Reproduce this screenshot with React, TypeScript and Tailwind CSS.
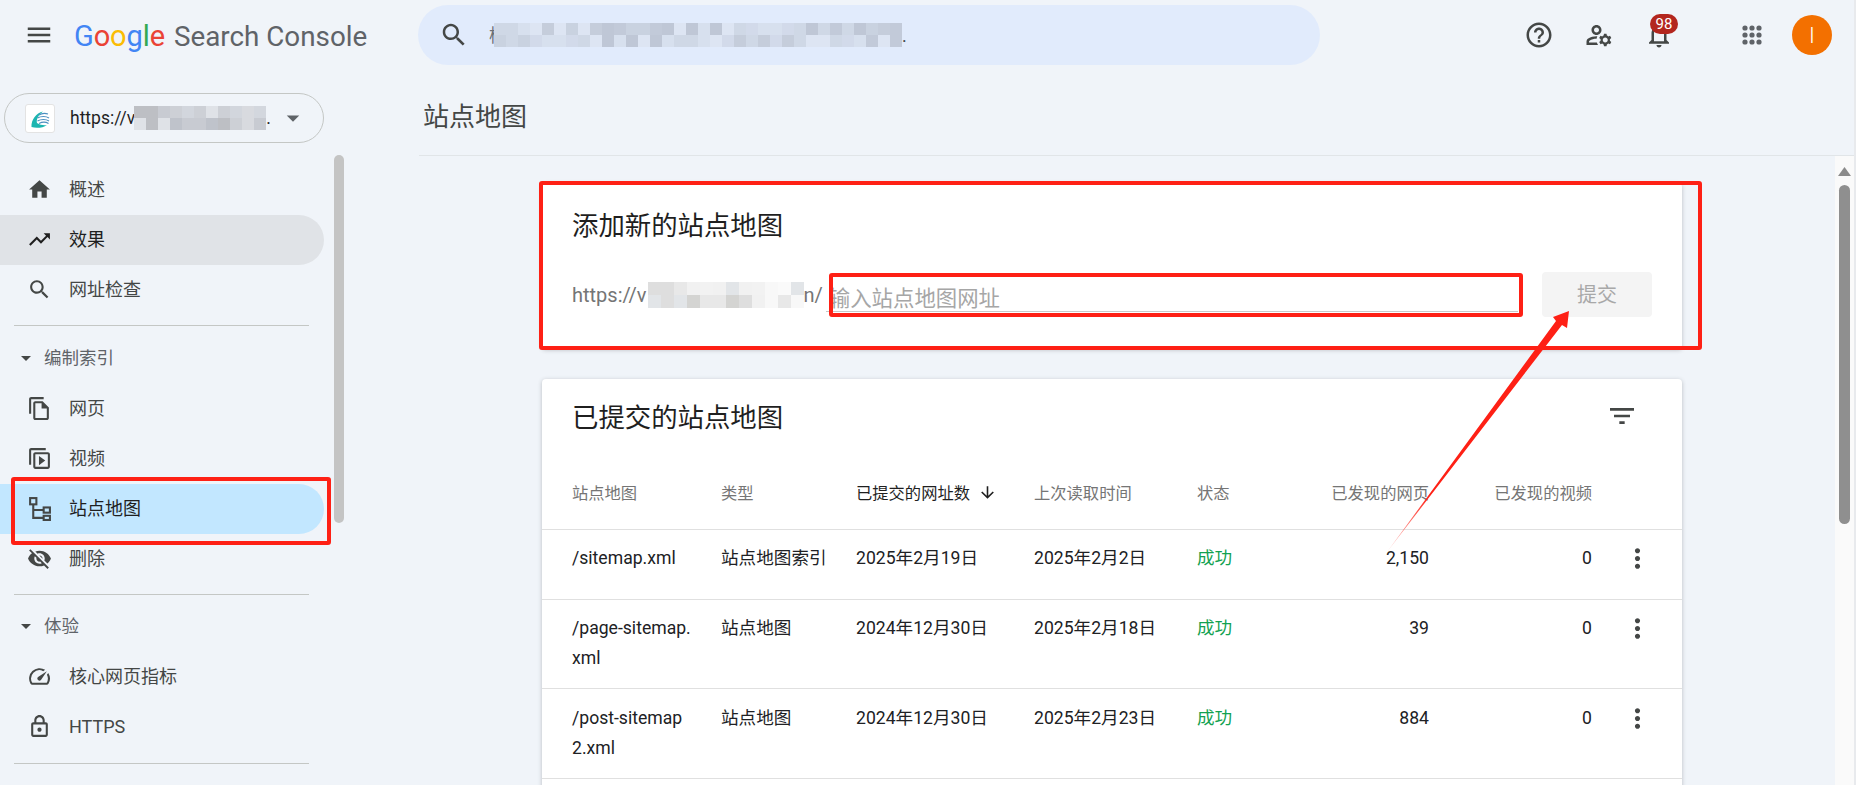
import React from "react";

const P = {
  menu: "M3 18h18v-2H3v2zm0-5h18v-2H3v2zm0-7v2h18V6H3z",
  home: "M10 20v-6h4v6h5v-8h3L12 3 2 12h3v8z",
  trend: "M16 6l2.29 2.29-4.88 4.88-4-4L2 16.59 3.41 18l6-6 4 4 6.3-6.29L22 12V6z",
  search: "M15.5 14h-.79l-.28-.27C15.41 12.59 16 11.11 16 9.5 16 5.91 13.09 3 9.5 3S3 5.91 3 9.5 5.91 16 9.5 16c1.61 0 3.09-.59 4.23-1.57l.27.28v.79l5 4.99L20.49 19l-4.99-5zm-6 0C7.01 14 5 11.99 5 9.5S7.01 5 9.5 5 14 7.01 14 9.5 11.99 14 9.5 14z",
  drop: "M7 10l5 5 5-5z",
  copy: "M16 1H4c-1.1 0-2 .9-2 2v14h2V3h12V1zm-1 4H8c-1.1 0-2 .9-2 2v14c0 1.1.9 2 2 2h11c1.1 0 2-.9 2-2V11l-6-6zM8 21V7h6v5h5v9H8z",
  video: "M2 4v14h2V4h14V2H4c-1.1 0-2 .9-2 2zm6 2c-1.1 0-2 .9-2 2v12c0 1.1.9 2 2 2h12c1.1 0 2-.9 2-2V8c0-1.1-.9-2-2-2H8zm0 2h12v12H8V8zm3.5 1.5v9l6-4.5z",
  off: "M12 7c2.76 0 5 2.24 5 5 0 .65-.13 1.26-.36 1.83l2.92 2.92c1.51-1.26 2.7-2.89 3.43-4.75-1.73-4.39-6-7.5-11-7.5-1.4 0-2.74.25-3.98.7l2.16 2.16C10.74 7.13 11.35 7 12 7zM2 4.27l2.28 2.28.46.46C3.08 8.3 1.78 10.02 1 12c1.73 4.39 6 7.5 11 7.5 1.55 0 3.03-.3 4.38-.84l.42.42L19.73 22 21 20.73 3.27 3 2 4.27zM7.53 9.8l1.55 1.55c-.05.21-.08.43-.08.65 0 1.66 1.34 3 3 3 .22 0 .44-.03.65-.08l1.55 1.55c-.67.33-1.41.53-2.2.53-2.76 0-5-2.24-5-5 0-.79.2-1.53.53-2.2zm4.31-.78l3.15 3.15.02-.16c0-1.66-1.34-3-3-3l-.17.01z",
  speed: "M20.38 8.57l-1.23 1.85a8 8 0 0 1-.22 7.58H5.07A8 8 0 0 1 15.58 6.85l1.85-1.23A10 10 0 0 0 3.35 19a2 2 0 0 0 1.72 1h13.85a2 2 0 0 0 1.74-1 10 10 0 0 0-.27-10.44zm-9.79 6.84a2 2 0 0 0 2.83 0l5.66-8.49-8.49 5.66a2 2 0 0 0 0 2.83z",
  lock: "M18 8h-1V6c0-2.76-2.24-5-5-5S7 3.24 7 6v2H6c-1.1 0-2 .9-2 2v10c0 1.1.9 2 2 2h12c1.1 0 2-.9 2-2V10c0-1.1-.9-2-2-2zM9 6c0-1.66 1.34-3 3-3s3 1.34 3 3v2H9V6zm9 14H6V10h12v10zm-6-3c1.1 0 2-.9 2-2s-.9-2-2-2-2 .9-2 2 .9 2 2 2z",
  help: "M11 18h2v-2h-2v2zm1-16C6.48 2 2 6.48 2 12s4.48 10 10 10 10-4.48 10-10S17.52 2 12 2zm0 18c-4.41 0-8-3.59-8-8s3.59-8 8-8 8 3.59 8 8-3.59 8-8 8zm0-14c-2.21 0-4 1.79-4 4h2c0-1.1.9-2 2-2s2 .9 2 2c0 2-3 1.75-3 5h2c0-2.25 3-2.5 3-5 0-2.21-1.79-4-4-4z",
  manage: "M4 18v-.65c0-.34.16-.66.41-.81C6.1 15.53 8.03 15 10 15c.03 0 .05 0 .08.01.1-.7.3-1.37.59-1.98-.22-.02-.44-.03-.67-.03-2.42 0-4.68.67-6.61 1.82-.88.52-1.39 1.5-1.39 2.53V20h9.26c-.42-.6-.75-1.28-.97-2H4zM10 12c2.21 0 4-1.79 4-4s-1.79-4-4-4-4 1.79-4 4 1.79 4 4 4zm0-6c1.1 0 2 .9 2 2s-.9 2-2 2-2-.9-2-2 .9-2 2-2zM20.75 16c0-.22-.03-.42-.06-.63l1.14-1.01-1-1.73-1.45.49c-.32-.27-.68-.48-1.08-.63L18 11h-2l-.3 1.49c-.4.15-.76.36-1.08.63l-1.45-.49-1 1.73 1.14 1.01c-.03.21-.06.41-.06.63s.03.42.06.63l-1.14 1.01 1 1.73 1.45-.49c.32.27.68.48 1.08.63L16 21h2l.3-1.49c.4-.15.76-.36 1.08-.63l1.45.49 1-1.73-1.14-1.01c.03-.21.06-.41.06-.63zM17 18c-1.1 0-2-.9-2-2s.9-2 2-2 2 .9 2 2-.9 2-2 2z",
  bell: "M12 22c1.1 0 2-.9 2-2h-4c0 1.1.9 2 2 2zm6-6v-5c0-3.07-1.63-5.64-4.5-6.32V4c0-.83-.67-1.5-1.5-1.5s-1.5.67-1.5 1.5v.68C7.64 5.36 6 7.92 6 11v5l-2 2v1h16v-1l-2-2zm-2 1H8v-6c0-2.48 1.51-4.5 4-4.5s4 2.02 4 4.5v6z",
  filter: "M10 18h4v-2h-4v2zM3 6v2h18V6H3zm3 7h12v-2H6v2z",
  more: "M12 8c1.1 0 2-.9 2-2s-.9-2-2-2-2 .9-2 2 .9 2 2 2zm0 2c-1.1 0-2 .9-2 2s.9 2 2 2 2-.9 2-2-.9-2-2-2zm0 6c-1.1 0-2 .9-2 2s.9 2 2 2 2-.9 2-2-.9-2-2-2z",
  down: "M20 12l-1.41-1.41L13 16.17V4h-2v12.17l-5.58-5.59L4 12l8 8 8-8z",
};

function Icon({ d, className }: { d: string; className: string }) {
  return (
    <svg viewBox="0 0 24 24" className={className} fill="currentColor" fillRule="evenodd">
      <path d={d} />
    </svg>
  );
}

function SitemapIcon() {
  return (
    <svg viewBox="0 0 24 24" className="w-[25px] h-[25px] shrink-0 text-[#444746]" fill="none" stroke="currentColor" strokeWidth="2">
      <rect x="3" y="2" width="6" height="6" />
      <rect x="16" y="11" width="6" height="5" />
      <rect x="16" y="19" width="6" height="4" />
      <path d="M6 8v13h10M6 13.5h10" />
    </svg>
  );
}

function Mosaic({ cols, rows, cell, palette, className }: { cols: number; rows: number; cell: number; palette: string[]; className: string }) {
  const rects: React.ReactNode[] = [];
  for (let r = 0; r < rows; r++) {
    for (let c = 0; c < cols; c++) {
      const v = (c * 7 + r * 5 + ((c * c) % 11) + c * r * 3) % palette.length;
      rects.push(<rect key={r + "-" + c} x={c * cell} y={r * cell} width={cell} height={cell} fill={palette[v]} />);
    }
  }
  return (
    <svg width={cols * cell} height={rows * cell} className={className} shapeRendering="crispEdges">
      {rects}
    </svg>
  );
}

const sidePalette = ["#bdbfc4", "#d2d6dd", "#c8cbd2", "#d8dadf", "#bfc3cb", "#dfe2e7", "#cdd0d6", "#d3d7de"];
const searchPalette = ["#cfd8e6", "#c5cddb", "#d7e0ee", "#bfc7d6", "#d2daea", "#c9d2e0", "#dde5f3", "#c2cad9"];
const cardPalette = ["#dedede", "#f2f2f2", "#e8e8e8", "#f8f8f8", "#d4d4d2", "#e2e5e8", "#f1f1f1", "#fafafa"];

function NavRow({ label, icon, state }: { label: string; icon: React.ReactNode; state?: "hover" | "active" }) {
  const bg = state === "hover" ? "bg-[#e0e3e7] rounded-r-full text-[#1f1f1f]" : state === "active" ? "bg-[#c2e7ff] rounded-r-full text-[#1f1f1f]" : "text-[#444746]";
  return (
    <div className={"flex items-center h-[50px] pb-[1px] pl-[27px] gap-[17px] text-[18px] " + bg}>
      {icon}
      <span>{label}</span>
    </div>
  );
}

function SectionHead({ label }: { label: string }) {
  return (
    <div className="flex items-center h-[50px] pb-[2px] pl-[14px] gap-[6px] text-[17.5px] text-[#5f6368]">
      <Icon d={P.drop} className="w-6 h-6 text-[#444746]" />
      <span>{label}</span>
    </div>
  );
}

const ic = "w-[25px] h-[25px] shrink-0 text-[#444746]";

const rows = [
  { name: "/sitemap.xml", type: "站点地图索引", sub: "2025年2月19日", read: "2025年2月2日", pages: "2,150", cls: "pt-[13px] pb-[15px] min-h-[70px]" },
  { name: "/page-sitemap.xml", type: "站点地图", sub: "2024年12月30日", read: "2025年2月18日", pages: "39", cls: "pt-[13px] pb-[15px]" },
  { name: "/post-sitemap2.xml", type: "站点地图", sub: "2024年12月30日", read: "2025年2月23日", pages: "884", cls: "pt-[14px] pb-[15px]" },
];

export default function App() {
  return (
    <div className="relative w-full h-[785px] overflow-hidden bg-[#f9f9f9] font-[Roboto,'Noto_Sans_CJK_SC',sans-serif]">
      <div className="flex flex-col h-full bg-[#f0f4f9] border-r-2 border-[#e8eaed]">
        {/* top bar */}
        <header className="flex items-center h-[70px] shrink-0 pl-[24px] pr-[22px]">
          <Icon d={P.menu} className="w-[30px] h-[30px] text-[#444746]" />
          <div className="flex items-baseline w-[344px] ml-[20px] mt-[2px] leading-none whitespace-nowrap font-[Roboto,sans-serif]">
            <span className="text-[29px] tracking-[-0.1px]">
              <span className="text-[#4285f4]">G</span>
              <span className="text-[#ea4335]">o</span>
              <span className="text-[#fbbc05]">o</span>
              <span className="text-[#4285f4]">g</span>
              <span className="text-[#34a853]">l</span>
              <span className="text-[#ea4335]">e</span>
            </span>
            <span className="ml-[9px] text-[27.8px] text-[#5f6368]">Search Console</span>
          </div>
          <div className="flex items-center w-[902px] h-[60px] rounded-full bg-[#e1ebfc] pl-[21px]">
            <Icon d={P.search} className="w-[30px] h-[30px] text-[#444746]" />
            <span className="ml-[20px] text-[18px] text-[#6a6f75] whitespace-nowrap">检</span>
            <Mosaic cols={34} rows={2} cell={12} palette={searchPalette} className="-ml-[13px]" />
            <span className="text-[18px] text-[#444746]">.</span>
          </div>
          <div className="flex items-center ml-auto">
            <Icon d={P.help} className="w-[30px] h-[30px] text-[#444746]" />
            <Icon d={P.manage} className="w-[30px] h-[30px] ml-[30px] text-[#444746]" />
            <div className="relative w-[30px] h-[30px] ml-[30px]">
              <Icon d={P.bell} className="w-[30px] h-[30px] text-[#444746]" />
              <span className="absolute left-[6px] top-[-6px] flex items-center justify-center w-[28px] h-[20px] rounded-full bg-[#b3261e] text-white text-[15px] leading-none">98</span>
            </div>
            <svg viewBox="0 0 20 20" className="w-[20px] h-[20px] ml-[68px] text-[#5f6368]" fill="currentColor">
              {[3, 10, 17].map((y) =>
                [3, 10, 17].map((x) => <circle key={x + "-" + y} cx={x} cy={y} r="2.6" />)
              )}
            </svg>
            <div className="flex items-center justify-center w-[40px] h-[40px] ml-[30px] rounded-full bg-[#f37000] text-white text-[22px] font-light">I</div>
          </div>
        </header>

        <div className="flex flex-1 min-h-0">
          {/* sidebar */}
          <aside className="flex flex-col w-[419px] shrink-0">
            <div className="flex items-center w-[320px] h-[50px] ml-[4px] mt-[23px] shrink-0 rounded-full border border-[#c4c7c5] pl-[20px]">
              <div className="flex items-center justify-center w-[30px] h-[29px] rounded-[3px] bg-white border border-[#e3e3e3]">
                <svg viewBox="0 0 24 24" className="w-[24px] h-[24px]">
                  <path d="M3.5 21C3 14 8 7 15 5.5 10 9 8 14 9 17c3 2 7 2.500 10 2-4 3-11 3.500-15.500 2z" fill="#1cb5b0" />
                  <path d="M11 9c3-2 6-2 9-1M9.500 12c3.500-2 8.500-2 11.500 0M9.500 15c3.500-2 8.500-2 11.500 0M11 17.500c3-1.500 7-1.500 9.500 0" fill="none" stroke="#4a8fc0" strokeWidth="1.200" />
                </svg>
              </div>
              <span className="ml-[15px] text-[17.5px] text-[#1f1f1f] whitespace-nowrap">https://v</span>
              <Mosaic cols={11} rows={2} cell={12} palette={sidePalette} className="-ml-[1px]" />
              <span className="text-[17.5px] text-[#1f1f1f]">.</span>
              <Icon d={P.drop} className="w-[30px] h-[30px] ml-[7px] text-[#5f6368]" />
            </div>
            <div className="flex flex-1 min-h-0 mt-[12px]">
              <nav className="w-[324px] pt-[10px] shrink-0">
                <NavRow label="概述" icon={<Icon d={P.home} className={ic} />} />
                <NavRow label="效果" state="hover" icon={<Icon d={P.trend} className="w-[25px] h-[25px] shrink-0 text-[#1f1f1f]" />} />
                <NavRow label="网址检查" icon={<Icon d={P.search} className={ic} />} />
                <div className="h-px ml-[14px] w-[295px] mt-[10px] mb-[8px] bg-[#c4c7c5]" />
                <SectionHead label="编制索引" />
                <NavRow label="网页" icon={<Icon d={P.copy} className={ic} />} />
                <NavRow label="视频" icon={<Icon d={P.video} className={ic} />} />
                <NavRow label="站点地图" state="active" icon={<SitemapIcon />} />
                <NavRow label="删除" icon={<Icon d={P.off} className={ic} />} />
                <div className="h-px ml-[14px] w-[295px] mt-[10px] mb-[7px] bg-[#c4c7c5]" />
                <SectionHead label="体验" />
                <NavRow label="核心网页指标" icon={<Icon d={P.speed} className={ic} />} />
                <NavRow label="HTTPS" icon={<Icon d={P.lock} className={ic} />} />
                <div className="h-px ml-[14px] w-[295px] mt-[11px] bg-[#c4c7c5]" />
              </nav>
              <div className="w-[10px] h-[368px] ml-[10px] rounded-full bg-[#c4c4c4]" />
            </div>
          </aside>

          {/* main */}
          <main className="flex flex-col flex-1 min-w-0">
            <div className="flex items-center h-[86px] shrink-0 pl-[4px] pt-[9px] border-b border-[#e1e5e8]">
              <h1 className="text-[26px] text-[#444746] font-normal">站点地图</h1>
            </div>
            <div className="flex flex-1 min-h-0">
              <div className="flex-1 min-w-0 overflow-hidden pl-[123px] pt-[27px]">
                {/* add card */}
                <section className="w-[1140px] h-[166px] rounded-[4px] bg-white shadow-[0_1px_4px_rgba(60,64,67,0.3)] px-[30px] pt-[26px]">
                  <h2 className="text-[26.4px] leading-[34px] text-[#1f1f1f] font-normal">添加新的站点地图</h2>
                  <div className="flex items-center h-[45px] mt-[29px]">
                    <span className="text-[20px] text-[#757575] whitespace-nowrap">https://v</span>
                    <Mosaic cols={12} rows={2} cell={13} palette={cardPalette} className="ml-[1px]" />
                    <span className="text-[20px] text-[#757575]">n/</span>
                    <input
                      readOnly
                      placeholder="输入站点地图网址"
                      className="flex-1 min-w-0 self-start mt-[3px] ml-[3px] h-[37px] pt-[11px] pl-[3px] text-[21.4px] border-b border-[#c8c8c8] outline-none placeholder:text-[#a6a6a6]"
                    />
                    <button className="w-[110px] h-[45px] ml-[24px] rounded-[4px] bg-[#f4f4f4] text-[20px] text-[#a8a8a8]">提交</button>
                  </div>
                </section>

                {/* list card */}
                <section className="w-[1140px] mt-[30px] rounded-t-[4px] bg-white shadow-[0_1px_4px_rgba(60,64,67,0.3)] pb-[40px]">
                  <div className="flex justify-between items-start h-[80px] pl-[30px] pr-[44px]">
                    <h2 className="mt-[22px] text-[26.4px] leading-[34px] text-[#1f1f1f] font-normal">已提交的站点地图</h2>
                    <Icon d={P.filter} className="w-[32px] h-[32px] mt-[21px] text-[#444746]" />
                  </div>
                  <div className="flex items-center h-[71px] pl-[30px] border-b border-[#e0e0e0] text-[16.3px] text-[#757575]">
                    <div className="w-[149px]">站点地图</div>
                    <div className="w-[135px]">类型</div>
                    <div className="flex items-center gap-[8px] w-[178px] text-[#1f1f1f]">
                      已提交的网址数
                      <Icon d={P.down} className="w-[19px] h-[19px] mb-[3px]" />
                    </div>
                    <div className="w-[163px]">上次读取时间</div>
                    <div className="w-[90px]">状态</div>
                    <div className="w-[142px] text-right">已发现的网页</div>
                    <div className="w-[163px] text-right">已发现的视频</div>
                  </div>
                  {rows.map((r) => (
                    <div key={r.name} className={"flex pl-[30px] border-b border-[#e0e0e0] text-[17.6px] leading-[30px] text-[#202124] " + r.cls}>
                      <div className="w-[149px] pr-[29px] break-all">{r.name}</div>
                      <div className="w-[135px]">{r.type}</div>
                      <div className="w-[178px]">{r.sub}</div>
                      <div className="w-[163px]">{r.read}</div>
                      <div className="w-[90px] text-[#12a150]">成功</div>
                      <div className="w-[142px] text-right">{r.pages}</div>
                      <div className="w-[163px] text-right">0</div>
                      <div className="flex justify-center w-[90px]">
                        <Icon d={P.more} className="w-[31px] h-[31px] text-[#444746]" />
                      </div>
                    </div>
                  ))}
                </section>
              </div>
              {/* window scrollbar */}
              <div className="flex flex-col items-center w-[19px] shrink-0 bg-[#fafafa]">
                <svg viewBox="0 0 13 9" className="w-[13px] h-[9px] mt-[11px] text-[#8b8b8b]" fill="currentColor">
                  <path d="M6.500 0L13 9H0z" />
                </svg>
                <div className="w-[11px] h-[339px] mt-[9px] rounded-full bg-[#8f8f8f]" />
              </div>
            </div>
          </main>
        </div>
      </div>

      {/* annotations drawn over the screenshot */}
      <div className="absolute left-[11px] top-[477px] w-[320px] h-[68px] rounded-[3px] border-[4px] border-[#fe2015]" />
      <div className="absolute left-[539px] top-[181px] w-[1163px] h-[169px] rounded-[3px] border-[4px] border-[#fe2015]" />
      <div className="absolute left-[829px] top-[273px] w-[694px] h-[44px] rounded-[3px] border-[4px] border-[#fe2015]" />
      <svg className="absolute left-0 top-0 w-[1856px] h-[785px] pointer-events-none">
        <defs>
          <linearGradient id="fade" gradientUnits="userSpaceOnUse" x1="1387" y1="552" x2="1430" y2="495">
            <stop offset="0" stopColor="#fe2015" stopOpacity="0.2" />
            <stop offset="1" stopColor="#fe2015" />
          </linearGradient>
        </defs>
        <path d="M1387 552L1556 321L1553 317L1569 311L1567 328L1562 325Z" fill="url(#fade)" />
      </svg>
    </div>
  );
}
